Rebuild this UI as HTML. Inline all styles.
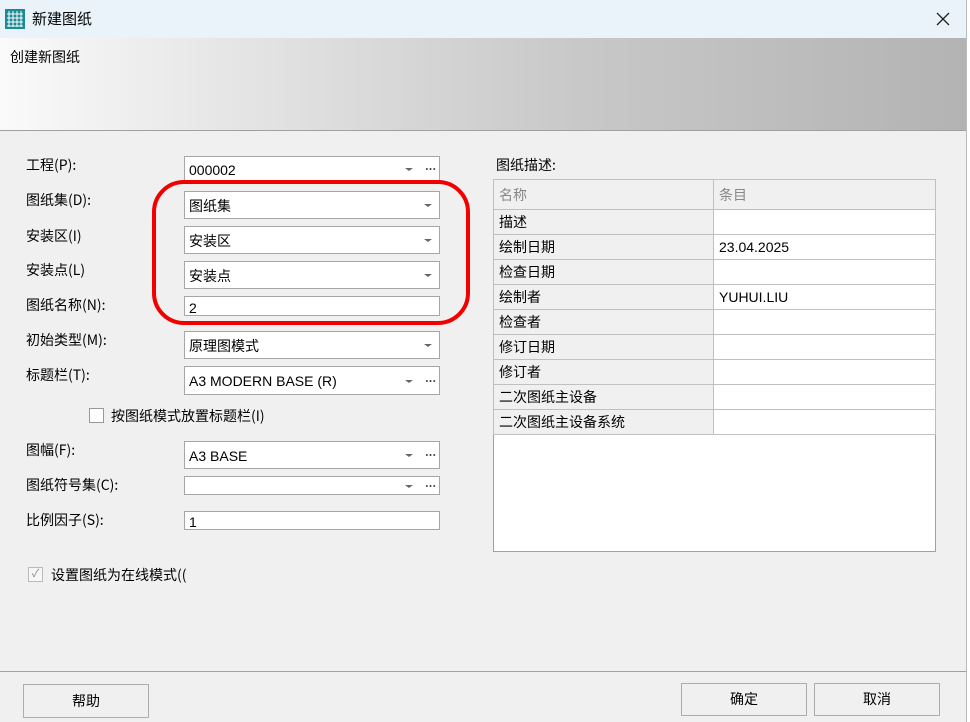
<!DOCTYPE html>
<html><head><meta charset="utf-8"><style>
*{box-sizing:border-box;margin:0;padding:0}
body{width:970px;height:722px;overflow:hidden;background:#f0f0f0;font-family:"Liberation Sans","Noto Sans CJK SC",sans-serif;font-size:14px;color:#000;position:relative}
.a{position:absolute}
.title{left:0;top:0;width:966px;height:38px;background:#eaf3fa}
.hdr{left:0;top:38px;width:966px;height:93px;background:linear-gradient(to right,#fafafa,#dcdcdc 35%,#c8c8c8 60%,#b3b3b3);border-bottom:1px solid #a0a0a0}
.strip{left:966px;top:0;width:4px;height:722px;background:#fff;border-left:1px solid #bbb}
.lbl{left:26px;font-size:14px;font-family:"Noto Sans CJK SC",sans-serif;line-height:20px}
.f{left:184px;width:256px;background:#fff;border:1px solid #a6a6a6;padding-left:4px;font-size:14px}
.dd::after{content:"";position:absolute;right:7px;top:50%;margin-top:-1px;border-left:4px solid transparent;border-right:4px solid transparent;border-top:3px solid #666}
.dd.e::after{right:26px}
.dots{position:absolute;right:3px;top:50%;margin-top:-1px;width:11px;height:2px;background:radial-gradient(circle,#444 0.9px,transparent 1.1px) 0 0/3.7px 2px repeat-x}
table{border-collapse:collapse;position:absolute;left:493px;top:179px;width:443px}
td{border:1px solid #c0c0c0;height:25px;padding-left:5px;font-size:14px}
td.l{width:220px;background:#f0f0f0}
td.r{background:#fff}
.btn{border:1px solid #adadad;background:#f0f0f0;text-align:center;font-size:14px}
.cb{width:15px;height:15px;border:1px solid #999;background:#fff}
</style></head><body>
<div class="a title"></div>
<svg class="a" style="left:5px;top:9px" width="20" height="20" viewBox="0 0 20 20"><rect width="20" height="20" fill="#1b8a93"/><g stroke="#fff" stroke-width="1"><path d="M4 2v16M8 2v16M12 2v16M16 2v16M2 5h16M2 9h16M2 13h16M2 17h16"/></g></svg>
<div class="a" style="left:32px;top:8px;font-size:15px">新建图纸</div>
<svg class="a" style="left:936px;top:12px" width="14" height="14"><path d="M1 1L13 13M13 1L1 13" stroke="#222" stroke-width="1.3"/></svg>
<div class="a hdr"></div>
<div class="a" style="left:10px;top:47px">创建新图纸</div>
<div class="a strip"></div>

<div class="a lbl" style="top:155px">工程(P):</div>
<div class="a f dd e" style="top:156px;height:26px;line-height:26px">000002<span class="dots"></span></div>
<div class="a lbl" style="top:190px">图纸集(D):</div>
<div class="a f dd" style="top:191px;height:28px;line-height:28px">图纸集</div>
<div class="a lbl" style="top:226px">安装区(I)</div>
<div class="a f dd" style="top:226px;height:28px;line-height:28px">安装区</div>
<div class="a lbl" style="top:260px">安装点(L)</div>
<div class="a f dd" style="top:261px;height:28px;line-height:28px">安装点</div>
<div class="a lbl" style="top:295px">图纸名称(N):</div>
<div class="a f" style="top:296px;height:20px;line-height:22px">2</div>
<div class="a lbl" style="top:330px">初始类型(M):</div>
<div class="a f dd" style="top:331px;height:28px;line-height:28px">原理图模式</div>
<div class="a lbl" style="top:365px">标题栏(T):</div>
<div class="a f dd e" style="top:366px;height:29px;line-height:29px">A3 MODERN BASE (R)<span class="dots"></span></div>
<div class="a cb" style="left:89px;top:408px"></div>
<div class="a" style="left:111px;top:406px;font-family:'Noto Sans CJK SC',sans-serif;line-height:20px">按图纸模式放置标题栏(I)</div>
<div class="a lbl" style="top:440px">图幅(F):</div>
<div class="a f dd e" style="top:441px;height:28px;line-height:28px">A3 BASE<span class="dots"></span></div>
<div class="a lbl" style="top:475px">图纸符号集(C):</div>
<div class="a f dd e" style="top:476px;height:19px"><span class="dots"></span></div>
<div class="a lbl" style="top:510px">比例因子(S):</div>
<div class="a f" style="top:511px;height:19px;line-height:20px">1</div>
<div class="a cb" style="left:28px;top:567px;border-color:#bbb;background:#f7f7f7;font-size:11px;line-height:13px;text-align:center;color:#888">✓</div>
<div class="a" style="left:51px;top:565px;font-family:'Noto Sans CJK SC',sans-serif;line-height:20px">设置图纸为在线模式((</div>

<div class="a" style="left:152px;top:180px;width:318px;height:145px;border:4px solid #f20000;border-radius:32px"></div>

<div class="a" style="left:496px;top:155px;font-family:'Noto Sans CJK SC',sans-serif;line-height:20px">图纸描述:</div>
<div class="a" style="left:493px;top:179px;width:443px;height:373px;background:#fff;border:1px solid #a0a0a0"></div>
<table>
<tr><td class="l" style="height:30px;color:#888">名称</td><td class="r" style="background:#f0f0f0;color:#888">条目</td></tr>
<tr><td class="l">描述</td><td class="r"></td></tr>
<tr><td class="l">绘制日期</td><td class="r">23.04.2025</td></tr>
<tr><td class="l">检查日期</td><td class="r"></td></tr>
<tr><td class="l">绘制者</td><td class="r">YUHUI.LIU</td></tr>
<tr><td class="l">检查者</td><td class="r"></td></tr>
<tr><td class="l">修订日期</td><td class="r"></td></tr>
<tr><td class="l">修订者</td><td class="r"></td></tr>
<tr><td class="l">二次图纸主设备</td><td class="r"></td></tr>
<tr><td class="l">二次图纸主设备系统</td><td class="r"></td></tr>
</table>

<div class="a" style="left:0;top:671px;width:966px;height:1px;background:#a0a0a0"></div>
<div class="a btn" style="left:23px;top:684px;width:126px;height:34px;line-height:32px">帮助</div>
<div class="a btn" style="left:681px;top:683px;width:126px;height:33px;line-height:31px">确定</div>
<div class="a btn" style="left:814px;top:683px;width:126px;height:33px;line-height:31px">取消</div>
</body></html>
